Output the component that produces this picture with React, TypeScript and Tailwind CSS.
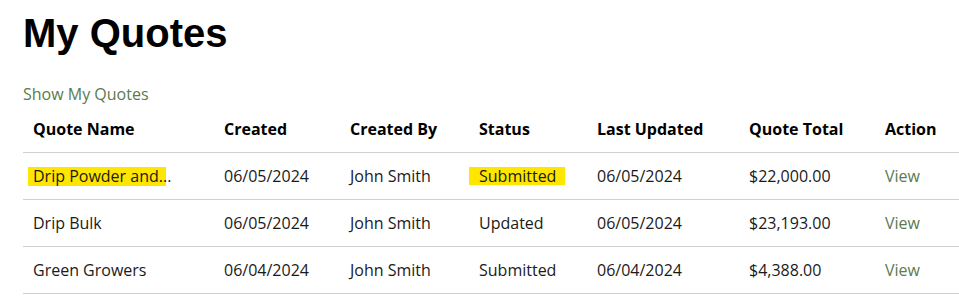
const quotes = [
  { name: 'Drip Powder and...', created: '06/05/2024', by: 'John Smith', status: 'Submitted', updated: '06/05/2024', total: '$22,000.00', mark: true },
  { name: 'Drip Bulk', created: '06/05/2024', by: 'John Smith', status: 'Updated', updated: '06/05/2024', total: '$23,193.00', mark: false },
  { name: 'Green Growers', created: '06/04/2024', by: 'John Smith', status: 'Submitted', updated: '06/04/2024', total: '$4,388.00', mark: false },
];

const COLS = ['Quote Name', 'Created', 'Created By', 'Status', 'Last Updated', 'Quote Total', 'Action'];
const WIDTHS = ['w-[191px]', 'w-[126px]', 'w-[129px]', 'w-[118px]', 'w-[152px]', 'w-[136px]', 'w-[84px]'];

export default function App() {
  return (
    <div className="bg-white min-h-[301px] pl-[23px] pt-[9px] text-[#1a1a1a]" style={{ fontFamily: '"Open Sans", sans-serif' }}>
      <h1 className="text-[40px] leading-[48px] font-bold text-black" style={{ fontFamily: '"Liberation Sans", Arial, sans-serif' }}>
        My Quotes
      </h1>

      <a className="block mt-[26px] text-[16px] leading-[22px] text-[#5b7a4e]">Show My Quotes</a>

      <table className="table-fixed w-[936px] border-collapse text-[16px] leading-[22px]">
        <colgroup>
          {WIDTHS.map((w, i) => <col key={i} className={w} />)}
        </colgroup>
        <thead>
          <tr className="border-b border-[#d0d0d0]">
            {COLS.map(c => (
              <th key={c} className="text-left font-bold text-black pl-[10px] pt-[13px] pb-[12px]">{c}</th>
            ))}
          </tr>
        </thead>
        <tbody>
          {quotes.map(q => (
            <tr key={q.name} className="border-b border-[#d0d0d0] h-[47px]">
              <td className="pl-[5px] whitespace-nowrap">
                {q.mark
                  ? <span className="inline-block w-[138px] bg-[#ffe600] pl-[5px] leading-[19px]">{q.name}</span>
                  : <span className="pl-[5px]">{q.name}</span>}
              </td>
              <td className="pl-[10px]">{q.created}</td>
              <td className="pl-[10px]">{q.by}</td>
              <td className="whitespace-nowrap">
                {q.mark
                  ? <span className="inline-block w-[96px] bg-[#ffe600] pl-[10px] leading-[18px]">{q.status}</span>
                  : <span className="pl-[10px]">{q.status}</span>}
              </td>
              <td className="pl-[10px]">{q.updated}</td>
              <td className="pl-[10px]">{q.total}</td>
              <td className="pl-[10px]"><a className="text-[#5b7a4e]">View</a></td>
            </tr>
          ))}
        </tbody>
      </table>
    </div>
  );
}
